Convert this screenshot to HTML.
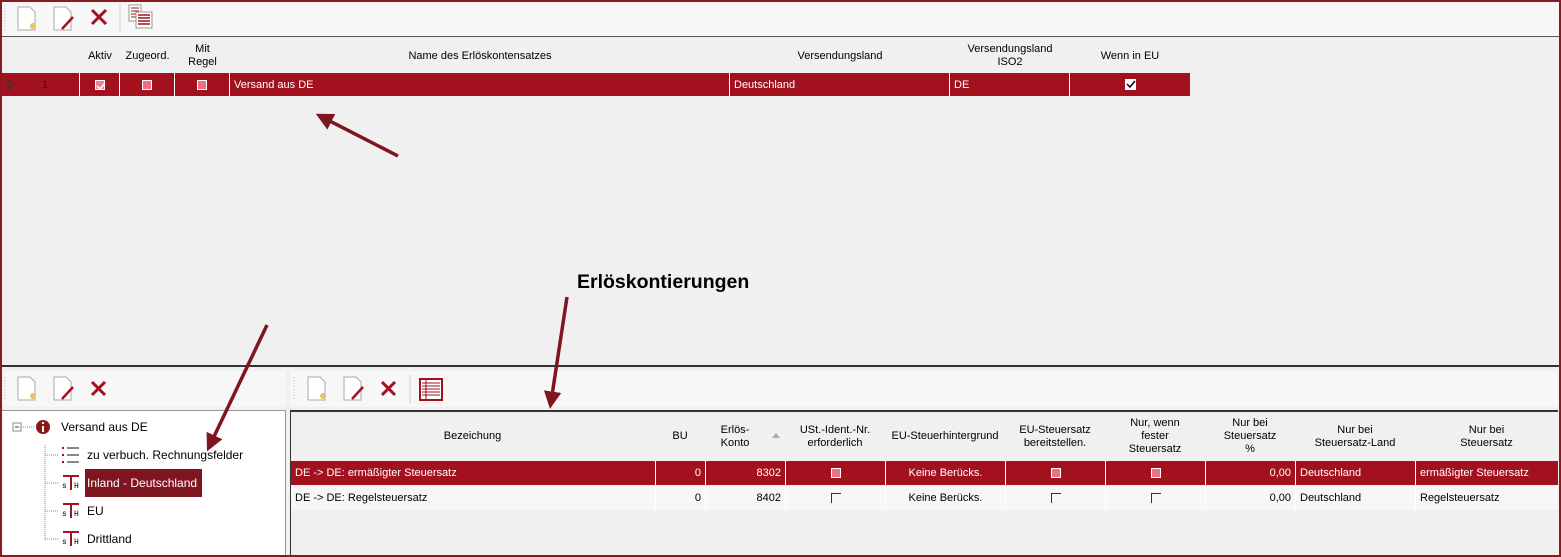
<!DOCTYPE html>
<html><head><meta charset="utf-8"><style>
*{box-sizing:border-box;margin:0;padding:0}
body{width:1561px;height:557px;position:relative;overflow:hidden;background:#f0f0f0;font-family:"Liberation Sans",sans-serif;font-size:11px;color:#000}
.a{position:absolute}
.frame{left:0;top:0;width:1561px;height:557px;border:2px solid #8a1a22;z-index:9;pointer-events:none}
.tb{background:#f7f7f7}
.hd{position:absolute;text-align:center;font-size:11px;line-height:13px;display:flex;align-items:center;justify-content:center}
.cell{position:absolute;height:100%;border-right:1px solid #fff;padding:0 4px;display:flex;align-items:center}
.red{background:#a3111f;color:#fff}
.cb{width:10px;height:10px;background:#f07080;border:1px solid #fff}
.cbo{width:10px;height:10px;border-left:1px solid #333;border-top:1px solid #333}
</style></head><body>
<div class="a frame"></div>
<div class="a tb" style="left:0;top:0;width:1561px;height:37px;border-bottom:1px solid #555"></div>
<svg class="a" style="left:0;top:0" width="160" height="37">
<line x1="5" y1="5" x2="5" y2="30" stroke="#bbb" stroke-dasharray="1,2"/>
<path d="M18 7h12l5 5v18h-17z" fill="#fff" stroke="#aaa"/><circle cx="33" cy="26" r="3" fill="#f0c060"/>
<path d="M54 7h12l5 5v18h-17z" fill="#fff" stroke="#aaa"/><line x1="62" y1="29" x2="73" y2="17" stroke="#a3111f" stroke-width="2.5"/>
<path d="M92 10l14 14M106 10l-14 14" stroke="#a3111f" stroke-width="3"/>
<line x1="120" y1="4" x2="120" y2="32" stroke="#ccc"/>
<rect x="129" y="5" width="12" height="16" fill="#fff" stroke="#999"/><path d="M131 8h8M131 11h8M131 14h8M131 17h8" stroke="#a3111f"/>
<rect x="136" y="12" width="16" height="16" fill="#fff" stroke="#999"/><path d="M138 15h12M138 18h12M138 21h12M138 24h12" stroke="#a3111f" stroke-width="1.5"/>
</svg>
<div class="hd" style="left:80px;top:40px;width:40px;height:32px">Aktiv</div>
<div class="hd" style="left:120px;top:40px;width:55px;height:32px">Zugeord.</div>
<div class="hd" style="left:175px;top:40px;width:55px;height:32px">Mit<br>Regel</div>
<div class="hd" style="left:230px;top:40px;width:500px;height:32px">Name des Erlöskontensatzes</div>
<div class="hd" style="left:730px;top:40px;width:220px;height:32px">Versendungsland</div>
<div class="hd" style="left:950px;top:40px;width:120px;height:32px">Versendungsland<br>ISO2</div>
<div class="hd" style="left:1070px;top:40px;width:120px;height:32px">Wenn in EU</div>
<div class="a red" style="left:2px;top:73px;width:1188px;height:23px">
<div class="cell" style="left:0;width:78px;color:#222"><svg width="10" height="12"><path d="M2 1l6 5-6 5z" fill="none" stroke="#333"/></svg><span style="margin-left:26px;color:#222">1</span></div>
<div class="cell" style="left:78px;width:40px;justify-content:center"><div class="cb" style="background:#f08090;position:relative"><svg class="a" style="left:0;top:0" width="10" height="10"><path d="M1 5l3 3 5-6" stroke="#fff" fill="none" stroke-width="1.5"/></svg></div></div>
<div class="cell" style="left:118px;width:55px;justify-content:center"><div class="cb"></div></div>
<div class="cell" style="left:173px;width:55px;justify-content:center"><div class="cb"></div></div>
<div class="cell" style="left:228px;width:500px">Versand aus DE</div>
<div class="cell" style="left:728px;width:220px">Deutschland</div>
<div class="cell" style="left:948px;width:120px">DE</div>
<div class="cell" style="left:1068px;width:120px;justify-content:center;border-right:none"><div style="width:11px;height:11px;background:#fff;position:relative"><svg class="a" width="11" height="11"><path d="M2 5l3 3 5-6" stroke="#000" fill="none" stroke-width="1.5"/></svg></div></div>
</div>
<div class="a" style="left:577px;top:271px;font-size:19.5px;font-weight:bold">Erlöskontierungen</div>
<div class="a" style="left:0;top:365px;width:1561px;height:2px;background:#333"></div>
<div class="a tb" style="left:2px;top:371px;width:284px;height:36px"></div>
<div class="a tb" style="left:290px;top:371px;width:1268px;height:36px"></div>
<svg class="a" style="left:0;top:371px" width="460" height="36">
<line x1="5" y1="6" x2="5" y2="30" stroke="#bbb" stroke-dasharray="1,2"/>
<path d="M18 6h12l5 5v18h-17z" fill="#fff" stroke="#aaa"/><circle cx="33" cy="25" r="3" fill="#f0c060"/>
<path d="M54 6h12l5 5v18h-17z" fill="#fff" stroke="#aaa"/><line x1="62" y1="28" x2="73" y2="16" stroke="#a3111f" stroke-width="2.5"/>
<path d="M92 11l13 13M105 11l-13 13" stroke="#a3111f" stroke-width="3"/>
<line x1="294" y1="6" x2="294" y2="30" stroke="#bbb" stroke-dasharray="1,2"/>
<path d="M308 6h12l5 5v18h-17z" fill="#fff" stroke="#aaa"/><circle cx="323" cy="25" r="3" fill="#f0c060"/>
<path d="M344 6h12l5 5v18h-17z" fill="#fff" stroke="#aaa"/><line x1="352" y1="28" x2="363" y2="16" stroke="#a3111f" stroke-width="2.5"/>
<path d="M382 11l13 13M395 11l-13 13" stroke="#a3111f" stroke-width="3"/>
<line x1="410" y1="4" x2="410" y2="32" stroke="#ccc"/>
<rect x="420" y="8" width="22" height="21" fill="#fff" stroke="#a3111f" stroke-width="2"/><path d="M422 12h18M422 15h18M422 18h18M422 21h18M422 24h18M426 9v19" stroke="#a3111f"/>
</svg>
<div class="a" style="left:2px;top:410px;width:284px;height:145px;background:#fff;border-top:1px solid #999;border-right:1px solid #999"></div>
<svg class="a" style="left:0;top:410px" width="90" height="145">
<rect x="13" y="13" width="8" height="8" fill="#fff" stroke="#888"/><line x1="15" y1="17" x2="19" y2="17" stroke="#33a"/>
<path d="M21 17h13M45 35v95M45 45h14M45 73h14M45 101h14M45 129h14" stroke="#888" stroke-dasharray="1,1"/>
<circle cx="43" cy="17" r="7" fill="#8a1a1a"/><rect x="42" y="16" width="2" height="6" fill="#fff"/><rect x="42" y="12" width="2" height="2" fill="#fff"/>
<path d="M62 38h2M62 45h2M62 52h2" stroke="#a3111f" stroke-width="2"/><path d="M67 38h12M67 45h12M67 52h12" stroke="#888" stroke-width="2"/>
<g id="sh"><path d="M63 66h16M71 66v14" stroke="#a3111f" stroke-width="2"/><text x="62" y="78" font-size="8" font-family="Liberation Mono">s</text><text x="74" y="78" font-size="8" font-family="Liberation Mono">H</text></g>
<use href="#sh" y="28"/><use href="#sh" y="56"/>
</svg>
<div class="a" style="left:61px;top:420px;font-size:12px">Versand aus DE</div>
<div class="a" style="left:87px;top:448px;font-size:12px">zu verbuch. Rechnungsfelder</div>
<div class="a" style="left:85px;top:469px;width:117px;height:28px;background:#7f1520;color:#fff;padding:7px 2px;font-size:12px">Inland - Deutschland</div>
<div class="a" style="left:87px;top:504px;font-size:12px">EU</div>
<div class="a" style="left:87px;top:532px;font-size:12px">Drittland</div>
<div class="a" style="left:290px;top:410px;width:1268px;height:145px;background:#f0f0f0;border-top:2px solid #333;border-left:1px solid #333"></div>
<div class="hd" style="left:290px;top:413px;width:365px;height:47px">Bezeichung</div>
<div class="hd" style="left:655px;top:413px;width:50px;height:47px">BU</div>
<div class="hd" style="left:705px;top:413px;width:60px;height:47px">Erlös-<br>Konto</div>
<div class="a" style="left:772px;top:433px;width:0;height:0;border:4px solid transparent;border-bottom:5px solid #aaa;border-top:0"></div>
<div class="hd" style="left:785px;top:413px;width:100px;height:47px">USt.-Ident.-Nr.<br>erforderlich</div>
<div class="hd" style="left:885px;top:413px;width:120px;height:47px">EU-Steuerhintergrund</div>
<div class="hd" style="left:1005px;top:413px;width:100px;height:47px">EU-Steuersatz<br>bereitstellen.</div>
<div class="hd" style="left:1105px;top:413px;width:100px;height:47px">Nur, wenn<br>fester<br>Steuersatz</div>
<div class="hd" style="left:1205px;top:413px;width:90px;height:47px">Nur bei<br>Steuersatz<br>%</div>
<div class="hd" style="left:1295px;top:413px;width:120px;height:47px">Nur bei<br>Steuersatz-Land</div>
<div class="hd" style="left:1415px;top:413px;width:143px;height:47px">Nur bei<br>Steuersatz</div>
<div class="a red" style="left:291px;top:461px;width:1267px;height:24px">
<div class="cell" style="left:0;width:365px">DE -&gt; DE: ermäßigter Steuersatz</div>
<div class="cell" style="left:365px;width:50px;justify-content:flex-end">0</div>
<div class="cell" style="left:415px;width:80px;justify-content:flex-end">8302</div>
<div class="cell" style="left:495px;width:100px;justify-content:center"><div class="cb"></div></div>
<div class="cell" style="left:595px;width:120px;justify-content:center">Keine Berücks.</div>
<div class="cell" style="left:715px;width:100px;justify-content:center"><div class="cb"></div></div>
<div class="cell" style="left:815px;width:100px;justify-content:center"><div class="cb"></div></div>
<div class="cell" style="left:915px;width:90px;justify-content:flex-end">0,00</div>
<div class="cell" style="left:1005px;width:120px">Deutschland</div>
<div class="cell" style="left:1125px;width:142px;border:none">ermäßigter Steuersatz</div>
</div>
<div class="a" style="left:291px;top:486px;width:1267px;height:24px;background:#f7f7f7">
<div class="cell" style="left:0;width:365px">DE -&gt; DE: Regelsteuersatz</div>
<div class="cell" style="left:365px;width:50px;justify-content:flex-end">0</div>
<div class="cell" style="left:415px;width:80px;justify-content:flex-end">8402</div>
<div class="cell" style="left:495px;width:100px;justify-content:center"><div class="cbo"></div></div>
<div class="cell" style="left:595px;width:120px;justify-content:center">Keine Berücks.</div>
<div class="cell" style="left:715px;width:100px;justify-content:center"><div class="cbo"></div></div>
<div class="cell" style="left:815px;width:100px;justify-content:center"><div class="cbo"></div></div>
<div class="cell" style="left:915px;width:90px;justify-content:flex-end">0,00</div>
<div class="cell" style="left:1005px;width:120px">Deutschland</div>
<div class="cell" style="left:1125px;width:142px;border:none">Regelsteuersatz</div>
</div>
<svg class="a" style="left:0;top:0;z-index:5" width="1561" height="557">
<defs><marker id="m" markerWidth="5" markerHeight="5" refX="3" refY="2.5" orient="auto"><path d="M0 0L5 2.5L0 5z" fill="#7f1520"/></marker></defs>
<g stroke="#7f1520" stroke-width="3.5" marker-end="url(#m)">
<line x1="398" y1="156" x2="322" y2="117"/>
<line x1="267" y1="325" x2="210" y2="445"/>
<line x1="567" y1="297" x2="551" y2="402"/>
</g></svg>
</body></html>
